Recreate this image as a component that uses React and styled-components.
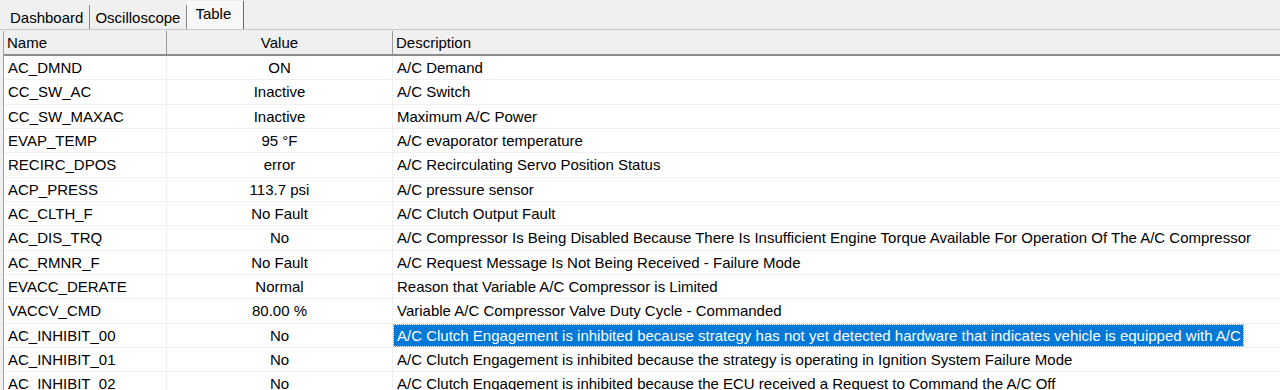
import React from 'react';
import styled, { createGlobalStyle } from 'styled-components';

const rows = [
  ['AC_DMND', 'ON', 'A/C Demand'],
  ['CC_SW_AC', 'Inactive', 'A/C Switch'],
  ['CC_SW_MAXAC', 'Inactive', 'Maximum A/C Power'],
  ['EVAP_TEMP', '95 °F', 'A/C evaporator temperature'],
  ['RECIRC_DPOS', 'error', 'A/C Recirculating Servo Position Status'],
  ['ACP_PRESS', '113.7 psi', 'A/C pressure sensor'],
  ['AC_CLTH_F', 'No Fault', 'A/C Clutch Output Fault'],
  ['AC_DIS_TRQ', 'No', 'A/C Compressor Is Being Disabled Because There Is Insufficient Engine Torque Available For Operation Of The A/C Compressor'],
  ['AC_RMNR_F', 'No Fault', 'A/C Request Message Is Not Being Received - Failure Mode'],
  ['EVACC_DERATE', 'Normal', 'Reason that Variable A/C Compressor is Limited'],
  ['VACCV_CMD', '80.00 %', 'Variable A/C Compressor Valve Duty Cycle - Commanded'],
  ['AC_INHIBIT_00', 'No', 'A/C Clutch Engagement is inhibited because strategy has not yet detected hardware that indicates vehicle is equipped with A/C'],
  ['AC_INHIBIT_01', 'No', 'A/C Clutch Engagement is inhibited because the strategy is operating in Ignition System Failure Mode'],
  ['AC_INHIBIT_02', 'No', 'A/C Clutch Engagement is inhibited because the ECU received a Request to Command the A/C Off'],
];

const SELECTED = 11;

const GlobalStyle = createGlobalStyle`
  html, body {
    margin: 0;
    height: 390px;
    overflow: hidden;
    background: #f0f0f0;
    font-family: "Liberation Sans", Arial, sans-serif;
    font-size: 15px;
    color: #000;
  }
`;

const Window = styled.div`
  width: 1280px;
  height: 390px;
  display: flex;
  flex-direction: column;
  background: #f0f0f0;
`;

const TabStrip = styled.div`
  height: 30px;
  display: flex;
  align-items: flex-end;
  padding-left: 5px;
  border-bottom: 1px solid #c8c8c8;
  box-sizing: border-box;
`;

const Tab = styled.div`
  height: ${p => (p.active ? '28px' : '24px')};
  padding: ${p => (p.active ? '0 12px 4px 8px' : '0 6px 0 5px')};
  display: flex;
  align-items: center;
  box-sizing: border-box;
  background: ${p => (p.active ? '#f7f7f7' : '#f0f0f0')};
  border-right: 1px solid ${p => (p.active ? '#6a6a6a' : '#8a8a8a')};
  font-size: 15px;
  white-space: nowrap;
`;

const Table = styled.div`
  flex: 1;
  margin-left: 3px;
  margin-top: 1px;
  border-left: 1px solid #a0a0a0;
  background: #fff;
  overflow: hidden;
`;

const cols = '163px 226px 1fr';

const HeaderRow = styled.div`
  display: grid;
  grid-template-columns: ${cols};
  height: 25px;
  background: #f0f0f0;
  border-bottom: 2px solid #8c8c8c;
  box-sizing: border-box;
`;

const HeaderCell = styled.div`
  display: flex;
  align-items: center;
  justify-content: ${p => (p.center ? 'center' : 'flex-start')};
  padding-left: ${p => (p.center ? '0' : '3px')};
  border-right: 1px solid ${p => (p.last ? 'transparent' : '#9a9a9a')};
  box-sizing: border-box;
`;

const Row = styled.div`
  display: grid;
  grid-template-columns: ${cols};
  height: 24.33px;
  border-bottom: 1px solid #f0f0f0;
  box-sizing: border-box;
`;

const Cell = styled.div`
  display: flex;
  align-items: center;
  justify-content: ${p => (p.center ? 'center' : 'flex-start')};
  padding-left: ${p => (p.center ? '0' : '1px')};
  border-right: 1px solid ${p => (p.last ? 'transparent' : '#f0f0f0')};
  white-space: nowrap;
  box-sizing: border-box;
  overflow: hidden;
`;

const Label = styled.span`
  padding: 2px 2px 2px 3px;
  line-height: 17px;
  background: ${p => (p.selected ? '#0078d7' : 'transparent')};
  color: ${p => (p.selected ? '#fff' : '#000')};
  outline: ${p => (p.selected ? '1px dotted #5aa0e0' : 'none')};
`;

const App = () => (
  <Window>
    <GlobalStyle />
    <TabStrip>
      <Tab>Dashboard</Tab>
      <Tab>Oscilloscope</Tab>
      <Tab active>Table</Tab>
    </TabStrip>
    <Table>
      <HeaderRow>
        <HeaderCell>Name</HeaderCell>
        <HeaderCell center>Value</HeaderCell>
        <HeaderCell last>Description</HeaderCell>
      </HeaderRow>
      {rows.map(([name, value, desc], i) => (
        <Row key={name}>
          <Cell><Label>{name}</Label></Cell>
          <Cell center>{value}</Cell>
          <Cell last><Label selected={i === SELECTED}>{desc}</Label></Cell>
        </Row>
      ))}
    </Table>
  </Window>
);

export default App;
